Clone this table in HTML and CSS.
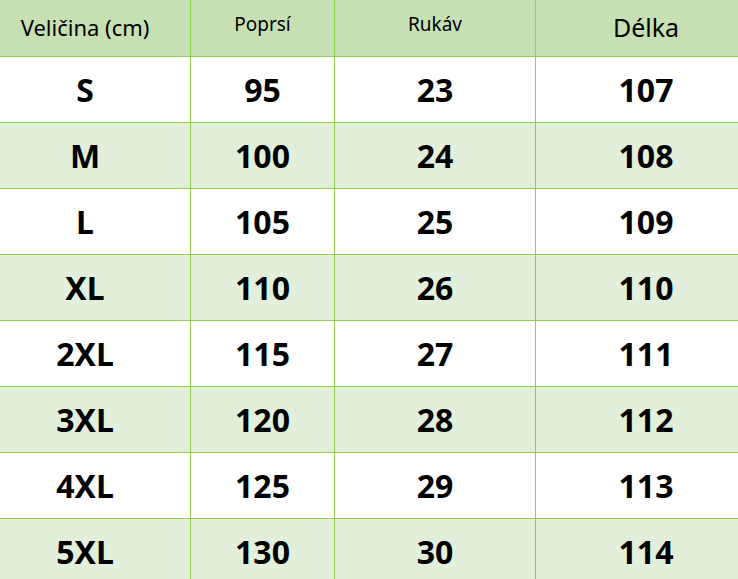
FILE: index.html
```html
<!DOCTYPE html>
<html lang="cs">
<head>
<meta charset="utf-8">
<link rel="stylesheet" href="styles.css">
</head>
<body>
<div class="table">
  <div class="row head">
    <div class="cell c1"><span class="h-main">Veličina (cm)</span></div>
    <div class="cell c2"><span class="h-small">Poprsí</span></div>
    <div class="cell c3"><span class="h-small">Rukáv</span></div>
    <div class="cell c4"><span class="h-big">Délka</span></div>
  </div>
  <div class="row"><div class="cell c1">S</div><div class="cell c2">95</div><div class="cell c3">23</div><div class="cell c4">107</div></div>
  <div class="row alt"><div class="cell c1">M</div><div class="cell c2">100</div><div class="cell c3">24</div><div class="cell c4">108</div></div>
  <div class="row"><div class="cell c1">L</div><div class="cell c2">105</div><div class="cell c3">25</div><div class="cell c4">109</div></div>
  <div class="row alt"><div class="cell c1">XL</div><div class="cell c2">110</div><div class="cell c3">26</div><div class="cell c4">110</div></div>
  <div class="row"><div class="cell c1">2XL</div><div class="cell c2">115</div><div class="cell c3">27</div><div class="cell c4">111</div></div>
  <div class="row alt"><div class="cell c1">3XL</div><div class="cell c2">120</div><div class="cell c3">28</div><div class="cell c4">112</div></div>
  <div class="row"><div class="cell c1">4XL</div><div class="cell c2">125</div><div class="cell c3">29</div><div class="cell c4">113</div></div>
  <div class="row alt"><div class="cell c1">5XL</div><div class="cell c2">130</div><div class="cell c3">30</div><div class="cell c4">114</div></div>
</div>
</body>
</html>
```
FILE: styles.css
```css
html, body {
  margin: 0;
  padding: 0;
  background: #ffffff;
  overflow: hidden;
}
body {
  font-family: "Noto Sans", "Open Sans", sans-serif;
  color: #000;
}
.table {
  width: 738px;
}
.row {
  display: grid;
  grid-template-columns: 191px 144px 201px 202px;
  height: 66px;
  border-bottom: 1px solid #92d050;
  box-sizing: border-box;
  background: #ffffff;
}
.row.alt {
  background: #e2efda;
}
.row.head {
  height: 57px;
  background: #c6e0b4;
}
.cell {
  display: flex;
  align-items: center;
  justify-content: center;
  font-weight: 700;
  font-size: 32px;
  border-right: 1px solid #92d050;
  box-sizing: border-box;
}
.cell.c4 {
  border-right: none;
  padding-left: 18px;
}
.cell.c1 {
  padding-right: 20px;
}
.head .cell {
  font-weight: 400;
  padding-bottom: 2px;
}
.h-main {
  font-size: 22px;
}
.h-small {
  font-size: 19px;
  padding-bottom: 6px;
}
.h-big {
  font-size: 25px;
}
```
